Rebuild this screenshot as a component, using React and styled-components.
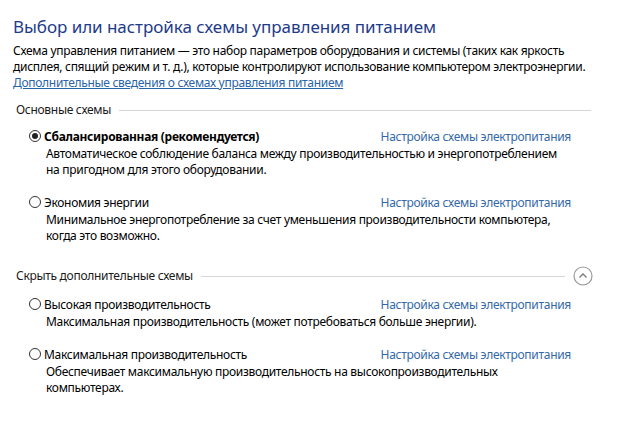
import React from 'react'
import styled, { createGlobalStyle } from 'styled-components'

const Global = createGlobalStyle`
  html, body {
    margin: 0;
    background: #fff;
  }
  body {
    font-family: "Noto Sans", "Open Sans", sans-serif;
    font-size: 12px;
    letter-spacing: -0.3px;
    color: #000;
  }
`

const Page = styled.div`
  width: 640px;
  height: 446px;
  padding: 16px 0 0 13px;
  box-sizing: border-box;
  overflow: hidden;
`

const Title = styled.h1`
  margin: 0;
  font-size: 17px;
  line-height: 22px;
  font-weight: 400;
  letter-spacing: -0.05px;
  color: #1e3b8a;
`

const Intro = styled.div`
  margin: 5px 0 0;
  line-height: 16px;
  width: 600px;
`

const MoreLink = styled.a`
  display: inline-block;
  color: #2a64a8;
  text-decoration: underline;
  line-height: 16px;
`

const Section = styled.section`
  margin-top: ${p => p.$top}px;
`

const SectionHead = styled.div`
  display: flex;
  align-items: center;
  gap: 8px;
  height: 16px;
  width: ${p => p.$width}px;
  padding-left: 3px;
  line-height: 16px;
  color: #1a1a1a;
`

const Rule = styled.div`
  flex: 1;
  height: 1px;
  background: #d3d7da;
`

const Toggle = styled.button`
  width: 20px;
  height: 20px;
  margin: -2px 0;
  padding: 0;
  border: none;
  background: none;
  display: flex;
  align-items: center;
  justify-content: center;
`

const Schemes = styled.div`
  margin-top: ${p => p.$top}px;
  padding-left: 16px;
  width: 542px;
`

const Scheme = styled.div`
  & + & {
    margin-top: 15px;
  }
`

const SchemeRow = styled.div`
  display: flex;
  align-items: center;
  height: 18px;
`

const Radio = styled.span`
  width: 12px;
  height: 12px;
  border: 1px solid #333;
  border-radius: 50%;
  box-sizing: border-box;
  display: flex;
  align-items: center;
  justify-content: center;
  margin-right: 3px;
  &::after {
    content: '';
    display: ${p => (p.$checked ? 'block' : 'none')};
    width: 6px;
    height: 6px;
    border-radius: 50%;
    background: #222;
  }
`

const Name = styled.span`
  flex: 1;
  font-weight: ${p => (p.$bold ? 700 : 400)};
`

const Setup = styled.a`
  color: #3469a8;
  text-decoration: none;
`

const Desc = styled.div`
  margin-top: 1px;
  padding-left: 17px;
  line-height: 16px;
  width: 512px;
`

const ChevronCircle = () => (
  <svg width="20" height="20" viewBox="0 0 20 20">
    <circle cx="10" cy="10" r="9" fill="none" stroke="#9a9a9a" strokeWidth="1.2" />
    <path d="M6.5 11.5 L10 8 L13.5 11.5" fill="none" stroke="#7a7a7a" strokeWidth="1.3" />
  </svg>
)

const main = [
  {
    name: 'Сбалансированная (рекомендуется)',
    checked: true,
    desc: 'Автоматическое соблюдение баланса между производительностью и энергопотреблением на пригодном для этого оборудовании.',
  },
  {
    name: 'Экономия энергии',
    desc: 'Минимальное энергопотребление за счет уменьшения производительности компьютера, когда это возможно.',
  },
]

const extra = [
  {
    name: 'Высокая производительность',
    desc: 'Максимальная производительность (может потребоваться больше энергии).',
  },
  {
    name: 'Максимальная производительность',
    desc: 'Обеспечивает максимальную производительность на высокопроизводительных компьютерах.',
  },
]

function SchemeList({ items, top }) {
  return (
    <Schemes $top={top}>
      {items.map(s => (
        <Scheme key={s.name}>
          <SchemeRow>
            <Radio $checked={s.checked} />
            <Name $bold={s.checked}>{s.name}</Name>
            <Setup href="#">Настройка схемы электропитания</Setup>
          </SchemeRow>
          <Desc>{s.desc}</Desc>
        </Scheme>
      ))}
    </Schemes>
  )
}

export default function App() {
  return (
    <Page>
      <Global />
      <Title>Выбор или настройка схемы управления питанием</Title>
      <Intro>
        Схема управления питанием — это набор параметров оборудования и системы (таких как яркость
        <br />
        дисплея, спящий режим и т. д.), которые контролируют использование компьютером электроэнергии.
        <br />
        <MoreLink href="#">Дополнительные сведения о схемах управления питанием</MoreLink>
      </Intro>

      <Section $top={11}>
        <SectionHead $width={575}>
          Основные схемы
          <Rule />
        </SectionHead>
        <SchemeList items={main} top={9} />
      </Section>

      <Section $top={24}>
        <SectionHead $width={577}>
          Скрыть дополнительные схемы
          <Rule />
          <Toggle>
            <ChevronCircle />
          </Toggle>
        </SectionHead>
        <SchemeList items={extra} top={11} />
      </Section>
    </Page>
  )
}
